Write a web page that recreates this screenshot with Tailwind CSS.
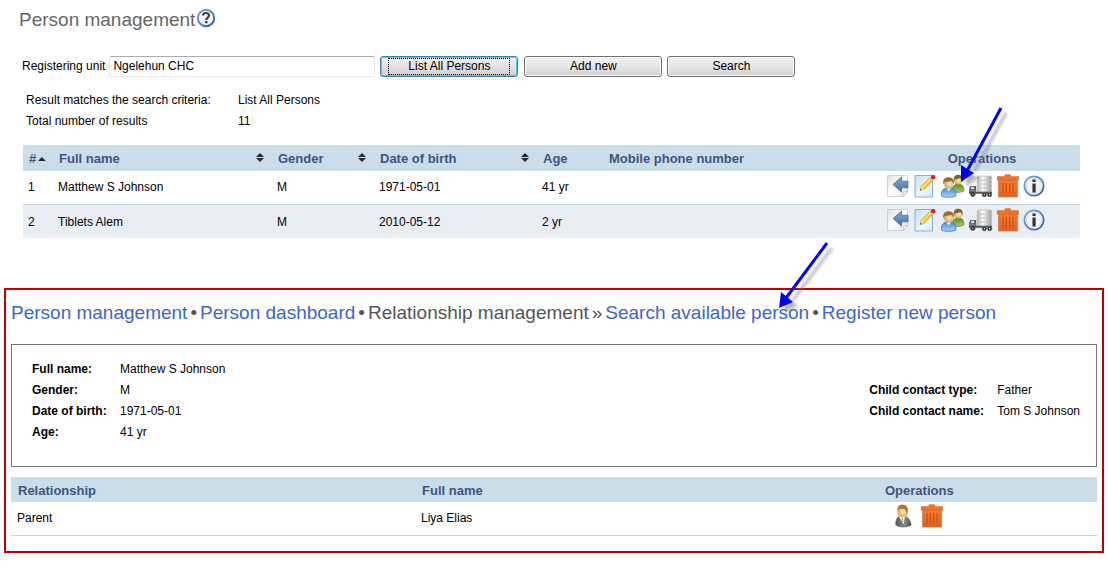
<!DOCTYPE html>
<html lang="en">
<head>
<meta charset="utf-8">
<meta name="viewport" content="width=device-width, initial-scale=1">
<title>Person management</title>
<script src="https://cdn.jsdelivr.net/npm/@tailwindcss/browser@4"></script>
</head>
<body class="bg-white font-['Liberation_Sans',Arial,sans-serif] text-xs text-black">
<svg class="absolute size-0" aria-hidden="true">
  <defs>
    <linearGradient id="page" x1="0" y1="0" x2="1" y2="1"><stop offset="0" stop-color="#dedede"/><stop offset=".5" stop-color="#fff"/><stop offset="1" stop-color="#e2e2e2"/></linearGradient>
    <linearGradient id="note" x1="0" y1="0" x2="1" y2="1"><stop offset="0" stop-color="#c5e0f8"/><stop offset=".6" stop-color="#f0f8ff"/><stop offset="1" stop-color="#cde4fa"/></linearGradient>
    <linearGradient id="arrowfill" x1="0" y1="0" x2="0" y2="1"><stop offset="0" stop-color="#85add8"/><stop offset="1" stop-color="#3e6ea8"/></linearGradient>
    <radialGradient id="face" cx=".6" cy=".5" r=".6"><stop offset="0" stop-color="#fff0c8"/><stop offset="1" stop-color="#d69b4c"/></radialGradient>
    <linearGradient id="blue" x1="0" y1="0" x2="0" y2="1"><stop offset="0" stop-color="#4689d4"/><stop offset="1" stop-color="#a9d4fa"/></linearGradient>
    <linearGradient id="green" x1="0" y1="0" x2="0" y2="1"><stop offset="0" stop-color="#5d8c29"/><stop offset="1" stop-color="#a3ce62"/></linearGradient>
    <linearGradient id="orange" x1="0" y1="0" x2="0" y2="1"><stop offset="0" stop-color="#ff7a2e"/><stop offset="1" stop-color="#e4611c"/></linearGradient>
    <linearGradient id="ring" x1="0" y1="0" x2="1" y2="1"><stop offset="0" stop-color="#7fa8dc"/><stop offset="1" stop-color="#2a5ba6"/></linearGradient>
    <linearGradient id="suit" x1="0" y1="0" x2="1" y2="0"><stop offset="0" stop-color="#5a5a5a"/><stop offset=".6" stop-color="#8a8a8a"/><stop offset="1" stop-color="#4a4a4a"/></linearGradient>
    <linearGradient id="disk" x1="0" y1="0" x2="1" y2="0"><stop offset="0" stop-color="#b5b5b5"/><stop offset=".4" stop-color="#fafafa"/><stop offset="1" stop-color="#9c9c9c"/></linearGradient>
    <symbol id="i-back" viewBox="0 0 24 24">
      <path d="M1.500 1.500h20v16l-4 5h-16z" fill="url(#page)" stroke="#c8c8c8" stroke-width=".8"/>
      <path d="M17.500 22.500l-.5-4.500 4.500-.5z" fill="#fff" stroke="#bbb" stroke-width=".8"/>
      <path d="M7 10.500L15.500 3v4.200H22v6.600h-6.500V18z" fill="url(#arrowfill)" stroke="#44699a" stroke-width=".8"/>
    </symbol>
    <symbol id="i-edit" viewBox="0 0 24 24">
      <path d="M2 1.500h17.500V23H2z" fill="url(#note)" stroke="#7fb2e0"/>
      <path d="M7 16.500l1-4L17.500 3l3 2.800L11 15.500z" fill="#fcc721" stroke="#b87e14" stroke-width=".6"/>
      <path d="M9 13.500l9.500-9.600" stroke="#ffe884" stroke-width="1.200"/>
      <path d="M7 16.500l1-4 3 3z" fill="#f2dfbc"/><path d="M7 16.500l.5-1.700 1.200 1.200z" fill="#333"/>
      <path d="M16.300 4.200l1.200-1.200 3 2.800-1.200 1.300z" fill="#bcc5d0"/>
      <rect x="18" y="1" width="4.500" height="4.200" rx="2" fill="#dd1c1c"/>
    </symbol>
    <symbol id="i-people" viewBox="0 0 26 25">
      <path d="M12.500 19c0-6 2-8.500 6.500-8.500s6 2.500 6 7c-2 1.800-8 2-12.500 1.500z" fill="url(#green)" stroke="#5b8530" stroke-width=".7"/>
      <circle cx="19" cy="6.500" r="4.400" fill="url(#face)"/>
      <path d="M14.300 8C13.500 3 15.500.8 19 .8s5.500 3 4.300 7c-.8-2.500-1.300-3-2.800-3.300-2 .8-4 .8-5 .8z" fill="#85602a"/>
      <path d="M1.500 23c-.5-6 2-8.500 7.500-8.500s8 2.500 7.500 8.500c-3 1.800-12 1.800-15 0z" fill="url(#blue)" stroke="#3c78bd" stroke-width=".8"/>
      <path d="M6.500 14.500h5L9 18z" fill="#fff"/>
      <ellipse cx="9" cy="10" rx="4.800" ry="5.500" fill="url(#face)"/>
      <path d="M3.500 11C2.500 6 5 3.500 9 3.500s6.300 3 5.200 7.500c-.7-2.500-1.400-3.400-2.700-3.700C9 8.300 6.500 8 5 8z" fill="#946a2d"/>
    </symbol>
    <symbol id="i-truck" viewBox="0 0 26 25">
      <g fill="url(#disk)" stroke="#b8b8b8" stroke-width=".6"><rect x="9.500" y="14" width="15" height="5" rx="1.500"/><rect x="9.500" y="10" width="15" height="4.500" rx="1.500"/><rect x="9.500" y="6" width="15" height="4.500" rx="1.500"/><rect x="9.500" y="2" width="15" height="4.500" rx="1.500"/></g>
      <path d="M1 20.500V16l1.500-3.500H8.500V18.500H25v2z" fill="#555"/>
      <path d="M2.500 16l1-2.700h3V16z" fill="#c8dce8"/>
      <path d="M1 17.500h7" stroke="#999"/>
      <g fill="#222" stroke="#777" stroke-width=".7"><circle cx="5" cy="21" r="2.500"/><circle cx="17" cy="21.500" r="2.300"/><circle cx="22.500" cy="21.500" r="2.300"/></g>
      <g fill="#ddd"><circle cx="5" cy="21" r=".8"/><circle cx="17" cy="21.500" r=".8"/><circle cx="22.500" cy="21.500" r=".8"/></g>
    </symbol>
    <symbol id="i-trash" viewBox="0 0 24 24">
      <path d="M2.500 5.500h19V23h-19z" fill="url(#orange)" stroke="#bd7b4b" stroke-width=".7"/>
      <path d="M1.300 2.700H9V.8h5.500v1.900h8v3.500H1.300z" fill="#fb701f" stroke="#c9682e" stroke-width=".7"/>
      <path d="M7 9v10.500M10.300 9v10.500M13.700 9v10.500M17 9v10.500" stroke="#b9551d" stroke-width="1.200"/>
    </symbol>
    <symbol id="i-info" viewBox="0 0 24 24">
      <circle cx="12" cy="12" r="10.500" fill="#fff" stroke="url(#ring)" stroke-width="2"/>
      <circle cx="12" cy="12" r="8.400" fill="#f0f2f5" stroke="#c9d7ea" stroke-width=".8"/>
      <path d="M10.300 4.800h3.500v2.900h-3.500zM10.300 9.300h3.500v9.700h-3.500z" fill="#333"/>
    </symbol>
    <symbol id="i-help" viewBox="0 0 20 20">
      <circle cx="10" cy="10" r="8.200" fill="#f4f7fb" stroke="url(#ring)" stroke-width="2"/>
      <path d="M7 7.500C7.100 5.700 8.200 5 10 5s3 .9 3 2.500C13 9.700 10.300 9.400 10.300 12" fill="none" stroke="#3b4048" stroke-width="2.200"/>
      <rect x="9.100" y="13" width="2.400" height="2.300" fill="#3b4048"/>
    </symbol>
    <symbol id="i-person" viewBox="0 0 20 25">
      <path d="M1.500 22c-.5-6 1.500-9.500 6.500-9.500 6 0 8.500 4 9.500 9.500-3 2.500-13 2.700-16 0z" fill="url(#suit)" stroke="#555" stroke-width=".6"/>
      <path d="M4.500 12.500h6.500L9.500 21z" fill="#fff"/><path d="M7.500 14l1.500 1 .4 4.500-1.600-3z" fill="#888"/>
      <ellipse cx="8.300" cy="8" rx="5" ry="6" fill="url(#face)"/>
      <path d="M3 7C2.800 2.500 5 .8 8.500.8c4.500 0 6.500 3.200 5.200 8.200l-1 3.500c-.3-3-.5-6-2-7C8 4.800 5 4.200 3 7z" fill="#b0782e"/>
    </symbol>
    <symbol id="i-sort" viewBox="0 0 8 9"><path d="M4 0l4 4H0zM0 5h8L4 9z" fill="#222c2e"/></symbol>
    <filter id="soft" x="-30%" y="-30%" width="160%" height="160%"><feGaussianBlur stdDeviation="1.500"/></filter>
  </defs>
</svg>

<header class="flex items-center gap-px pt-2 pl-[19px]">
  <h1 class="text-[19px] leading-6 text-[#666]">Person management</h1>
  <a href="#help" aria-label="Help" class="-mt-1"><svg class="size-5"><use href="#i-help"/></svg></a>
</header>

<main>
  <form class="mt-6 flex h-[21px] items-center pl-[22px]">
    <label for="unit" class="mr-1 pb-px">Registering unit</label>
    <input id="unit" type="text" value="Ngelehun CHC" class="h-[21px] w-[266px] rounded-xs border border-[#e3e9ef] border-t-[#abadb3] px-[3px] pb-0.5">
    <button type="button" class="ml-[5px] h-[21px] w-[138px] rounded-[3px] border border-[#3c7fb1] bg-linear-to-b from-[#f2f2f2] via-[#e2e2e2] to-[#cfcfcf] p-px shadow-[inset_0_0_0_1px_#48d0f4]"><span class="mx-1.5 block h-[17px] border border-dotted border-black leading-[15px]">List All Persons</span></button>
    <button type="button" class="ml-1.5 h-[21px] w-[138px] rounded-[3px] border border-[#707070] bg-linear-to-b from-[#f2f2f2] via-[#e6e6e6] to-[#cfcfcf] pb-0.5 shadow-[inset_0_0_0_1px_#fafafa]">Add new</button>
    <button type="button" class="ml-[5px] h-[21px] w-32 rounded-[3px] border border-[#707070] bg-linear-to-b from-[#f2f2f2] via-[#e6e6e6] to-[#cfcfcf] pb-0.5 shadow-[inset_0_0_0_1px_#fafafa]">Search</button>
  </form>

  <dl class="mt-[13px] grid grid-cols-[212px_1fr] pl-[26px] leading-[21px]">
    <dt>Result matches the search criteria:</dt><dd>List All Persons</dd>
    <dt>Total number of results</dt><dd>11</dd>
  </dl>

  <div class="mt-[13px] mr-7 ml-[23px]">
    <table class="w-full table-fixed border-collapse text-left">
      <colgroup><col class="w-[29px]"><col class="w-[219px]"><col class="w-[102px]"><col class="w-[163px]"><col class="w-[66px]"><col><col class="w-[204px]"></colgroup>
      <thead>
        <tr class="h-[26px] bg-[#cbdde9] text-[13px] text-[#3d5680]">
          <th class="px-1.5 pt-0.5"><span class="flex items-center gap-0.5">#<svg class="h-1 w-2" viewBox="0 0 8 4"><path d="M4 0l4 4H0z" fill="#222c2e"/></svg></span></th>
          <th class="px-[7px] pt-0.5"><span class="flex items-center justify-between">Full name<svg class="mb-0.5 h-[9px] w-2"><use href="#i-sort"/></svg></span></th>
          <th class="px-[7px] pt-0.5"><span class="flex items-center justify-between">Gender<svg class="mb-0.5 h-[9px] w-2"><use href="#i-sort"/></svg></span></th>
          <th class="px-[7px] pt-0.5"><span class="flex items-center justify-between">Date of birth<svg class="mb-0.5 h-[9px] w-2"><use href="#i-sort"/></svg></span></th>
          <th class="px-[7px] pt-0.5">Age</th>
          <th class="px-[7px] pt-0.5">Mobile phone number</th>
          <th class="pt-0.5 pl-2 text-center">Operations</th>
        </tr>
      </thead>
      <tbody>
        <tr class="h-[33px] border-b border-[#c3d3e6]">
          <td class="px-[5px]">1</td><td class="px-1.5">Matthew S Johnson</td><td class="px-1.5">M</td><td class="px-1.5">1971-05-01</td><td class="px-1.5">41 yr</td><td></td>
          <td class="pl-[10px]"><div class="flex items-center gap-[3px] pb-0.5">
            <button type="button" aria-label="Back"><svg class="block size-6"><use href="#i-back"/></svg></button>
            <button type="button" aria-label="Edit"><svg class="block size-6"><use href="#i-edit"/></svg></button>
            <button type="button" aria-label="Relationships" class="relative"><svg class="block h-6 w-[25px]"><use href="#i-people"/></svg>
              <svg class="pointer-events-none absolute bottom-[10px] left-4 z-10 h-[94px] w-[60px]" viewBox="0 0 60 94" aria-hidden="true">
                <g transform="translate(5 5)" fill="#777" stroke="#777" opacity=".5" filter="url(#soft)"><path d="M45 14L13 73" stroke-width="3"/><path d="M5 88L5 72L18 79z" stroke="none"/></g>
                <path d="M45 14L11 77" stroke="#00f" stroke-width="3"/><path d="M5 88L5 71L18 79z" fill="#00f"/>
              </svg></button>
            <button type="button" aria-label="Transfer"><svg class="block h-6 w-[25px]"><use href="#i-truck"/></svg></button>
            <button type="button" aria-label="Delete"><svg class="block size-6"><use href="#i-trash"/></svg></button>
            <button type="button" aria-label="Details"><svg class="block size-[22px]"><use href="#i-info"/></svg></button>
          </div></td>
        </tr>
        <tr class="h-[34px] bg-[#e9eef5]">
          <td class="px-[5px] pt-0.5">2</td><td class="px-1.5 pt-0.5">Tiblets Alem</td><td class="px-1.5 pt-0.5">M</td><td class="px-1.5 pt-0.5">2010-05-12</td><td class="px-1.5 pt-0.5">2 yr</td><td></td>
          <td class="pl-[10px]"><div class="flex items-center gap-[3px] pb-[3px]">
            <button type="button" aria-label="Back"><svg class="block size-6"><use href="#i-back"/></svg></button>
            <button type="button" aria-label="Edit"><svg class="block size-6"><use href="#i-edit"/></svg></button>
            <button type="button" aria-label="Relationships"><svg class="block h-6 w-[25px]"><use href="#i-people"/></svg></button>
            <button type="button" aria-label="Transfer"><svg class="block h-6 w-[25px]"><use href="#i-truck"/></svg></button>
            <button type="button" aria-label="Delete"><svg class="block size-6"><use href="#i-trash"/></svg></button>
            <button type="button" aria-label="Details"><svg class="block size-[22px]"><use href="#i-info"/></svg></button>
          </div></td>
        </tr>
      </tbody>
    </table>
  </div>

  <section class="mx-1 mt-[50px] border-2 border-[#c00000] px-[5px] pb-[15px]">
    <nav class="flex flex-wrap gap-x-[3px] pt-[11px] text-[19px] leading-6 text-[#555]">
      <a href="#management" class="text-[#3b66cc]">Person management</a><span>•</span><a href="#dashboard" class="text-[#3b66cc]">Person dashboard</a><span>•</span><span>Relationship management</span><span>»</span><a href="#search" class="relative text-[#3b66cc]">Search available person<svg class="pointer-events-none absolute right-[-31px] bottom-[10px] z-10 h-20 w-16" viewBox="0 0 64 80" aria-hidden="true">
        <g transform="translate(5 5)" fill="#777" stroke="#777" opacity=".5" filter="url(#soft)"><path d="M51 8L12 60" stroke-width="3"/><path d="M3 73L5 57L17 66z" stroke="none"/></g>
        <path d="M51 8L10 63" stroke="#00f" stroke-width="3"/><path d="M3 73L5 57L17 67z" fill="#00f"/>
      </svg></a><span>•</span><a href="#register" class="text-[#3b66cc]">Register new person</a>
    </nav>

    <div class="mt-[19px] flex justify-between border border-[#777] pt-[14px] pr-4 pb-[23px] pl-5 leading-[21px]">
      <dl class="grid grid-cols-[88px_auto]">
        <dt class="font-bold">Full name:</dt><dd>Matthew S Johnson</dd>
        <dt class="font-bold">Gender:</dt><dd>M</dd>
        <dt class="font-bold">Date of birth:</dt><dd>1971-05-01</dd>
        <dt class="font-bold">Age:</dt><dd>41 yr</dd>
      </dl>
      <dl class="grid grid-cols-[128px_auto] content-center">
        <dt class="font-bold">Child contact type:</dt><dd>Father</dd>
        <dt class="font-bold">Child contact name:</dt><dd>Tom S Johnson</dd>
      </dl>
    </div>

    <table class="mt-[10px] w-full table-fixed border-collapse text-left">
      <colgroup><col class="w-[404px]"><col><col class="w-[218px]"></colgroup>
      <thead><tr class="h-[25px] bg-[#cbdde9] text-[13px] text-[#3d5680]"><th class="px-[7px] pt-0.5">Relationship</th><th class="px-[7px] pt-0.5">Full name</th><th class="px-1.5 pt-0.5">Operations</th></tr></thead>
      <tbody><tr class="h-[33px] border-b border-[#c3d3e6]"><td class="px-1.5">Parent</td><td class="px-1.5">Liya Elias</td>
        <td class="pl-[15px]"><div class="flex items-center gap-1.5 pb-1">
          <button type="button" aria-label="Open person"><svg class="block h-6 w-5"><use href="#i-person"/></svg></button>
          <button type="button" aria-label="Delete relationship"><svg class="block size-6"><use href="#i-trash"/></svg></button>
        </div></td></tr></tbody>
    </table>
  </section>
</main>
</body>
</html>
